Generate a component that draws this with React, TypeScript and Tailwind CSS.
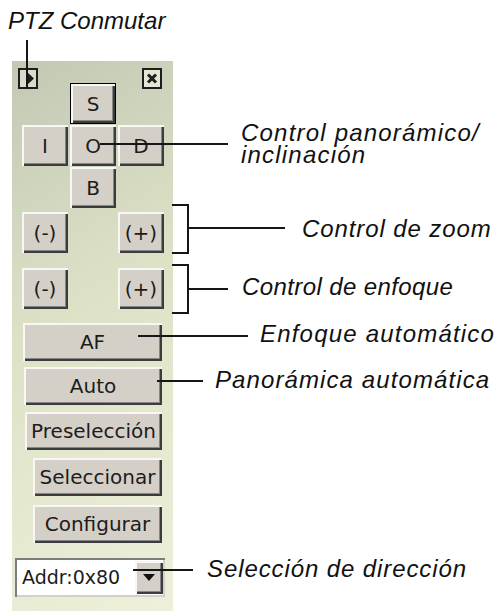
import React from 'react';

const btnFace =
  'flex items-center justify-center bg-[#d4d0c8] text-[20px] leading-none text-[#1c1c1c] shadow-[inset_2px_2px_0_#f7f7f5,inset_-2px_-2px_0_#3c3c3c,inset_-3px_-3px_0_#868686]';

const Btn = ({ label, className = '' }: { label: string; className?: string }) => (
  <div className={`${btnFace} ${className}`}>{label}</div>
);

const ToggleBox = () => (
  <svg width="20" height="21" viewBox="0 0 20 21" className="-ml-[4px] self-start">
    <rect x="1" y="1" width="18" height="19" fill="#dadccb" stroke="#1e1e1e" strokeWidth="2" />
    <polygon points="9,4 16,10.5 9,17" fill="#1e1e1e" />
  </svg>
);

const CloseBox = () => (
  <svg width="20" height="21" viewBox="0 0 20 21" className="mr-[2px] self-start justify-self-end">
    <rect x="1" y="1" width="18" height="19" fill="#e4e6d6" stroke="#1e1e1e" strokeWidth="2" />
    <path d="M6 6.5 L14 14.5 M14 6.5 L6 14.5" stroke="#1e1e1e" strokeWidth="3" />
  </svg>
);

const Line = ({ className }: { className: string }) => (
  <div className={`absolute bg-[#161616] ${className}`} />
);

const Label = ({ children, className }: { children: React.ReactNode; className: string }) => (
  <div
    className={`absolute whitespace-nowrap font-['Liberation_Sans',Arial,sans-serif] text-[24px] italic leading-[24px] text-[#111] ${className}`}
  >
    {children}
  </div>
);

export default function App() {
  return (
    <div className="relative h-[612px] w-[498px] overflow-hidden bg-white pl-[12px] pt-[61px] font-['DejaVu_Sans',sans-serif]">
      <div className="flex h-[550px] w-[161px] flex-col bg-[linear-gradient(150deg,#c3c8b4_0%,#dde2c7_45%,#eef0d9_100%)] pt-[7px]">
        <div className="ml-[10px] grid grid-cols-[46px_46px_46px] grid-rows-[56px_41px_41px] gap-x-[2px] gap-y-[1px]">
          <ToggleBox />
          <Btn label="S" className="h-[41px] self-end border border-black" />
          <CloseBox />
          <Btn label="I" />
          <Btn label="O" />
          <Btn label="D" />
          <div />
          <Btn label="B" />
          <div />
        </div>

        <div className="ml-[10px] mt-[4px] grid h-[41px] grid-cols-[46px_46px_46px] gap-x-[2px]">
          <Btn label="(-)" />
          <div />
          <Btn label="(+)" />
        </div>

        <div className="ml-[10px] mt-[15px] grid h-[41px] grid-cols-[46px_46px_46px] gap-x-[2px]">
          <Btn label="(-)" />
          <div />
          <Btn label="(+)" />
        </div>

        <div className="flex flex-col items-end pr-[11px]">
          <Btn label="AF" className="mt-[14px] h-[38px] w-[139px]" />
          <Btn label="Auto" className="mt-[6px] h-[38px] w-[138px]" />
          <Btn label="Preselección" className="mt-[7px] h-[38px] w-[137px]" />
          <Btn label="Seleccionar" className="mt-[8px] h-[38px] w-[129px]" />
          <Btn label="Configurar" className="mt-[9px] h-[38px] w-[129px]" />
        </div>

        <div className="ml-[3px] mt-[15px] flex h-[39px] w-[150px] items-center bg-white shadow-[inset_2px_2px_0_#7d7d7d,inset_-2px_-2px_0_#d4d0c8]">
          <span className="ml-[7px] flex-1 text-[19px] leading-none text-[#1c1c1c]">Addr:0x80</span>
          <div className={`${btnFace} mr-[2px] h-[33px] w-[28px]`}>
            <svg width="12" height="8" viewBox="0 0 12 8">
              <polygon points="0,0 12,0 6,7" fill="#111" />
            </svg>
          </div>
        </div>
      </div>

      {/* callouts */}
      <Label className="left-[8px] top-[9px]">PTZ Conmutar</Label>
      <Line className="left-[26px] top-[40px] h-[48px] w-[2px]" />

      <Line className="left-[100px] top-[143px] h-[2px] w-[128px]" />
      <Label className="left-[241px] top-[121px] leading-[22px] tracking-[1.2px]">Control panorámico/</Label>
      <Label className="left-[241px] top-[143px] leading-[22px] tracking-[1.2px]">inclinación</Label>

      <div className="absolute left-[172px] top-[204px] h-[50px] w-[17px] border-y-2 border-r-2 border-[#161616]" />
      <Line className="left-[188px] top-[227px] h-[2px] w-[97px]" />
      <Label className="left-[302px] top-[217px] tracking-[0.9px]">Control de zoom</Label>

      <div className="absolute left-[172px] top-[264px] h-[50px] w-[17px] border-y-2 border-r-2 border-[#161616]" />
      <Line className="left-[188px] top-[288px] h-[2px] w-[40px]" />
      <Label className="left-[242px] top-[275px] tracking-[0.4px]">Control de enfoque</Label>

      <Line className="left-[138px] top-[335px] h-[2px] w-[110px]" />
      <Label className="left-[260px] top-[322px] tracking-[1.2px]">Enfoque automático</Label>

      <Line className="left-[157px] top-[380px] h-[2px] w-[46px]" />
      <Label className="left-[215px] top-[368px] tracking-[1.1px]">Panorámica automática</Label>

      <Line className="left-[133px] top-[569px] h-[2px] w-[60px]" />
      <Label className="left-[207px] top-[557px] tracking-[0.9px]">Selección de dirección</Label>
    </div>
  );
}
